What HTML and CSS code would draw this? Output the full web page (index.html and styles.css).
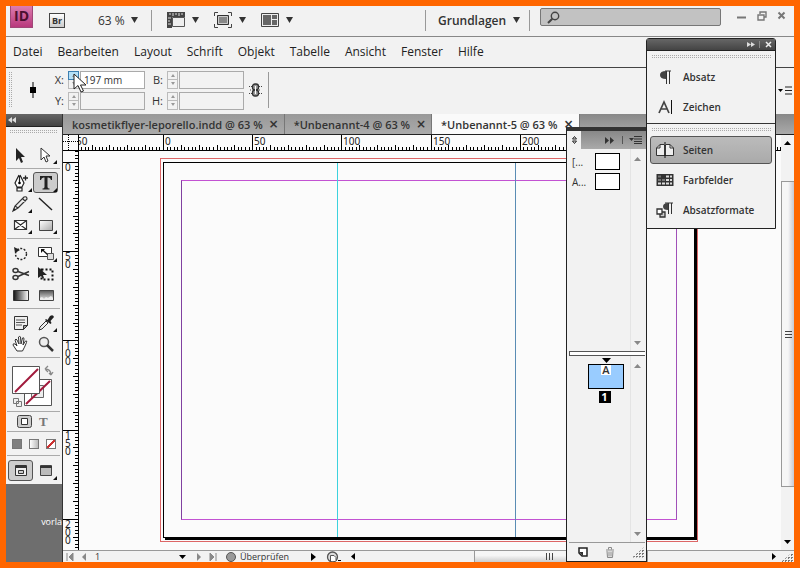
FILE: index.html
```html
<!DOCTYPE html>
<html lang="de">
<head>
    <title>InDesign</title>
    <meta charset="UTF-8">
    <link rel="stylesheet" href="styles.css">
</head>
<body>
<div class="window">
    <header class="app-bar">
        <div class="app-logo">ID</div>
        <button class="bridge">Br</button>
        <label class="pick zoom-pick">
            <select aria-label="Zoom"><option>63 %</option></select>
            <svg class="caret" viewBox="0 0 7 6"><path d="M0 0h7L3.500 6z"/></svg>
        </label>
        <span class="rule"></span>
        <button class="view-btn" aria-label="Anzeigeoptionen">
            <svg width="18" height="16" viewBox="0 0 18 16"><path d="M0 0h18v5H5v11H0z" fill="#444"/><path d="M5.500 5.500h12v9h-12z" fill="#eee" stroke="#555"/><path d="M3 1v2M6 1v3M9 1v2M12 1v3M15 1v2M1 6h3M1 9h2M1 12h3" stroke="#ddd"/></svg>
            <svg class="caret" viewBox="0 0 7 6"><path d="M0 0h7L3.500 6z"/></svg>
        </button>
        <button class="view-btn" aria-label="Bildschirmmodus">
            <svg width="18" height="16" viewBox="0 0 18 16"><path d="M.5 4V.5H4M14 .5h3.500V4M17.500 12v3.500H14M4 15.500H.5V12" fill="none" stroke="#444"/><path d="M3.500 3.500h11v9h-11z" fill="#888" stroke="#333"/><path d="M4.500 4.500h9v7h-9z" fill="none" stroke="#ccc"/></svg>
            <svg class="caret" viewBox="0 0 7 6"><path d="M0 0h7L3.500 6z"/></svg>
        </button>
        <button class="view-btn" aria-label="Dokumente anordnen">
            <svg width="18" height="14" viewBox="0 0 18 14"><path d="M.5.5h17v13H.5z" fill="#eee" stroke="#444"/><path d="M2 2h8v10H2zM11 2h5v4h-5zM11 7h5v5h-5z" fill="#666"/></svg>
            <svg class="caret" viewBox="0 0 7 6"><path d="M0 0h7L3.500 6z"/></svg>
        </button>
        <div class="app-right">
            <span class="rule"></span>
            <label class="pick workspace-pick">
                <select aria-label="Arbeitsbereich"><option>Grundlagen</option></select>
                <svg class="caret" viewBox="0 0 7 6"><path d="M0 0h7L3.500 6z"/></svg>
            </label>
            <span class="rule"></span>
            <label class="search">
                <svg width="13" height="13" viewBox="0 0 13 13"><circle cx="8" cy="5" r="3.700" fill="none" stroke="#444" stroke-width="1.400"/><path d="M5.300 7.700L1 12" stroke="#444" stroke-width="2"/></svg>
                <input type="search" aria-label="Suche">
            </label>
            <div class="window-buttons">
                <button aria-label="Minimieren"><svg width="10" height="10" viewBox="0 0 10 10"><path d="M0 6.500h9" stroke="#777" stroke-width="2"/></svg></button>
                <button aria-label="Wiederherstellen"><svg width="10" height="10" viewBox="0 0 10 10"><path d="M3 3V1h6v5H7M1 4h6v5H1z" fill="none" stroke="#777" stroke-width="1.400"/></svg></button>
                <button aria-label="Schließen"><svg width="10" height="10" viewBox="0 0 10 10"><path d="M1.500 1.500l6 6M7.500 1.500l-6 6" stroke="#777" stroke-width="2"/></svg></button>
            </div>
        </div>
    </header>

    <nav class="menu-bar">
        <a href="#">Datei</a>
        <a href="#">Bearbeiten</a>
        <a href="#">Layout</a>
        <a href="#">Schrift</a>
        <a href="#">Objekt</a>
        <a href="#">Tabelle</a>
        <a href="#">Ansicht</a>
        <a href="#">Fenster</a>
        <a href="#">Hilfe</a>
    </nav>

    <div class="control-bar">
        <span class="grip-v"></span>
        <svg class="ref-point" width="8" height="16" viewBox="0 0 8 16"><path d="M4 0v16" stroke="#000"/><path d="M1 5h6v6H1z"/></svg>
        <div class="fields">
            <label for="pos-x">X:</label>
            <div class="stepper">
                <div class="steps hot"><button aria-label="X erhöhen"></button><button aria-label="X verringern"></button></div>
                <input id="pos-x" type="text" value="197 mm">
            </div>
            <label for="size-b">B:</label>
            <div class="stepper">
                <div class="steps"><button aria-label="B erhöhen"></button><button aria-label="B verringern"></button></div>
                <input id="size-b" type="text">
            </div>
            <label for="pos-y">Y:</label>
            <div class="stepper">
                <div class="steps"><button aria-label="Y erhöhen"></button><button aria-label="Y verringern"></button></div>
                <input id="pos-y" type="text">
            </div>
            <label for="size-h">H:</label>
            <div class="stepper">
                <div class="steps"><button aria-label="H erhöhen"></button><button aria-label="H verringern"></button></div>
                <input id="size-h" type="text">
            </div>
        </div>
        <button class="chain" aria-label="Proportionen verketten">
            <svg width="13" height="14" viewBox="0 0 13 14"><path d="M0 3.500h3M1 7h2M0 10.500h3M10 3.500h3M10 7h2M10 10.500h3" stroke="#444" stroke-dasharray="1 1"/><rect x="3.500" y="1" width="6" height="6" rx="2.500" fill="#999" stroke="#333" stroke-width="1.300"/><rect x="3.500" y="7" width="6" height="6" rx="2.500" fill="#999" stroke="#333" stroke-width="1.300"/><path d="M6.500 3v8" stroke="#fff"/></svg>
        </button>
        <span class="rule tall"></span>
        <button class="panel-menu" aria-label="Bedienfeldmenü">
            <svg width="14" height="9" viewBox="0 0 14 9"><path d="M0 3h5L2.500 6z"/><path d="M7 1h7M7 4.500h7M7 8h7" stroke="#222"/></svg>
        </button>
    </div>

    <div class="workspace">
        <aside class="toolbox">
            <div class="toolbox-head"><svg width="8" height="6" viewBox="0 0 8 6"><path d="M4 0v6L0 3zM8 0v6L4 3z" fill="#ddd"/></svg></div>
            <div class="grip-h"></div>
            <div class="tools">
                <button aria-label="Auswahl"><svg viewBox="0 0 18 18"><path d="M4 2v13l3-3 2 5 2-1-2-5h4z" fill="#222"/></svg></button>
                <button class="more" aria-label="Direktauswahl"><svg viewBox="0 0 18 18"><path d="M4 2v12l3-3 2 5 2-1-2-5h4z" fill="#fff" stroke="#333"/></svg></button>
            </div>
            <div class="tools">
                <button class="more" aria-label="Zeichenstift"><svg viewBox="0 0 18 18"><path d="M7 1L3 9l2 4h5l2-4-4-8M7.500 2v7M5 14h5v3H5z" fill="#fff" stroke="#222" stroke-width="1.200"/><circle cx="7.500" cy="9" r="1.300"/><path d="M11 4h5M13.500 1.500v5" stroke="#222" stroke-width="1.300"/></svg></button>
                <button class="more selected" aria-label="Text"><svg viewBox="0 0 18 18"><path d="M3 2h12v4h-1q-.5-2.500-2.500-2.500h-1V13q0 1.500 2 1.500v1h-7v-1q2 0 2-1.500V3.500h-1Q4.500 3.500 4 6H3z" fill="#222"/></svg></button>
                <button class="more" aria-label="Buntstift"><svg viewBox="0 0 18 18"><path d="M1 16l2-5L12 2q3-1 3 2L6 13zM3 11l3 2M10.500 3.500l3 3" fill="#eee" stroke="#333" stroke-width="1.200"/><path d="M1 16l1-3 2 2z" fill="#222"/></svg></button>
                <button aria-label="Linie"><svg viewBox="0 0 18 18"><path d="M2 3l13 12" stroke="#222" stroke-width="1.400"/></svg></button>
                <button class="more" aria-label="Rechteckrahmen"><svg viewBox="0 0 18 18"><path d="M2.500 4.500h12v9h-12zM2.500 4.500l12 9M14.500 4.500l-12 9" fill="#fff" stroke="#333" stroke-width="1.200"/></svg></button>
                <button class="more" aria-label="Rechteck"><svg viewBox="0 0 18 18"><path d="M2.500 4.500h13v10h-13z" fill="url(#soft)" stroke="#444"/></svg></button>
            </div>
            <div class="tools">
                <button aria-label="Drehen"><svg viewBox="0 0 18 18"><circle cx="9" cy="10" r="5.500" fill="none" stroke="#222" stroke-width="1.400" stroke-dasharray="2 1.500"/><path d="M2 3l1 6 5-3z" fill="#222"/></svg></button>
                <button class="more" aria-label="Skalieren"><svg viewBox="0 0 18 18"><path d="M1.500 3.500h13v9h-13z" fill="#fff" stroke="#333"/><path d="M10.500 9.500h6v6h-6z" fill="#ddd" stroke="#555"/><path d="M4 5h4L6.800 6.200 11 10l-1 1-4.200-4L4 9z" fill="#111"/></svg></button>
                <button aria-label="Schere"><svg viewBox="0 0 18 18"><g fill="none" stroke="#333" stroke-width="1.500"><ellipse cx="3.500" cy="5.500" rx="2.500" ry="2"/><ellipse cx="3.500" cy="12.500" rx="2.500" ry="2"/><path d="M6 6.500l11 4M6 11.500l11-5"/></g></svg></button>
                <button aria-label="Frei transformieren"><svg viewBox="0 0 18 18"><path d="M4.500 4.500h11v10h-11z" fill="none" stroke="#111" stroke-width="2" stroke-dasharray="2 2"/><path d="M1 2v11l3-2 2 3 1-1-1-3h4z" fill="#222"/></svg></button>
                <button aria-label="Verlauf"><svg viewBox="0 0 18 18"><path d="M1.500 4.500h15v10h-15z" fill="url(#gradient)" stroke="#333"/></svg></button>
                <button aria-label="Weiche Verlaufskante"><svg viewBox="0 0 18 18"><path d="M2.500 4.500h14v10h-14z" fill="url(#feather)" stroke="#444"/><path d="M3 14v-2l2-1 2 2 2-2 2 1 3-2 2 2v2z" fill="#eee"/></svg></button>
            </div>
            <div class="tools">
                <button aria-label="Notiz"><svg viewBox="0 0 18 18"><path d="M2.500 2.500h13v9l-4 4h-9z" fill="#eee" stroke="#333"/><path d="M4 6h9M4 8.500h9M4 11h6" stroke="#555"/><path d="M11.500 15.500v-4h4z" fill="#999" stroke="#333"/></svg></button>
                <button class="more" aria-label="Pipette"><svg viewBox="0 0 18 18"><path d="M2 16l1-3 6-6 2 2-6 6z" fill="#eee" stroke="#333"/><path d="M8 6l1-1 1.500 1L13 2q3-2 4 1l-3.500 4 1 2-1 1z" fill="#222"/></svg></button>
                <button aria-label="Hand"><svg viewBox="0 0 18 18"><path d="M5 16Q3 13 1 10q0-2 2-1l2 2-2-6q1-2 2 0l2 4-.5-7q1.500-1.500 2 0l.5 7 1.500-6q1.500-1 1.500 1l-1 6 2.500-4q2-.5 1 1.500-2 5-4 8.500z" fill="#fff" stroke="#333"/></svg></button>
                <button aria-label="Zoom"><svg viewBox="0 0 18 18"><circle cx="7" cy="7" r="4.500" fill="#eee" stroke="#555" stroke-width="1.500"/><path d="M10 10l6 6" stroke="#333" stroke-width="2.500"/></svg></button>
            </div>
            <div class="swatches">
                <svg width="44" height="44" viewBox="0 0 44 44"><path d="M13.500 14.500h27v26h-27z" fill="#fff" stroke="#555"/><path d="M20.500 20.500h12v12h-12z" fill="#eee" stroke="#666"/><path d="M15 39l24-23" stroke="#a11a3c" stroke-width="2"/><path d="M1.500 1.500h27v27h-27z" fill="#fff" stroke="#555"/><path d="M4 27L27 4" stroke="#a11a3c" stroke-width="2"/><path d="M34 4q6 0 6 6M34 4l3-3M34 4l3 3M40 10l-2-2M40 10l2-3" fill="none" stroke="#888" stroke-width="1.300"/><path d="M5.500 36.500h5v5h-5zM2.500 33.500h5v5h-5z" fill="#eee" stroke="#777"/></svg>
            </div>
            <div class="apply-to">
                <button aria-label="Formatierung wirkt auf Rahmen"><svg width="15" height="13" viewBox="0 0 15 13"><rect x=".5" y=".5" width="14" height="12" rx="2" fill="#ccc" stroke="#444"/><path d="M4.500 3.500h6v6h-6z" fill="#fff" stroke="#333"/></svg></button>
                <button class="apply-text">T</button>
            </div>
            <div class="apply-color">
                <button class="solid" aria-label="Farbe"></button>
                <button class="fade" aria-label="Verlauf anwenden"></button>
                <button class="none" aria-label="Ohne"></button>
            </div>
            <div class="tools screen-mode">
                <button class="selected" aria-label="Normal"><svg viewBox="0 0 18 18"><path d="M3.500 3.500h11v10h-11z" fill="#eee" stroke="#333"/><path d="M3 5h12" stroke="#333" stroke-width="2"/><path d="M6.500 8.500h5v3h-5z" fill="#ccc" stroke="#333"/></svg></button>
                <button class="more" aria-label="Vorschau"><svg viewBox="0 0 18 18"><path d="M3.500 3.500h11v10h-11z" fill="#bbb" stroke="#444"/><path d="M3 5h12" stroke="#333" stroke-width="2"/></svg></button>
            </div>
            <div class="toolbox-rest"><span>vorla</span></div>
        </aside>

        <main class="document">
            <div class="tabs">
                <div class="tab">kosmetikflyer-leporello.indd @ 63 % <button aria-label="Tab schließen">×</button></div>
                <div class="tab">*Unbenannt-4 @ 63 % <button aria-label="Tab schließen">×</button></div>
                <div class="tab active">*Unbenannt-5 @ 63 % <button aria-label="Tab schließen">×</button></div>
            </div>
            <div class="ruler-corner"><svg width="15" height="15" viewBox="0 0 15 15"><path d="M0 6.500h15M5.500 0v15" stroke="#000" stroke-dasharray="1 1"/></svg></div>
            <svg class="ruler-x" id="ruler-x"></svg>
            <svg class="ruler-y" id="ruler-y"></svg>
            <div class="canvas">
                <div class="bleed">
                    <div class="page">
                        <div class="margins"></div>
                        <span class="guide guide-left"></span>
                        <span class="guide guide-right"></span>
                    </div>
                </div>
            </div>
            <div class="scroll-y">
                <button aria-label="Nach oben"><svg width="7" height="4" viewBox="0 0 7 4"><path d="M0 4h7L3.500 0z"/></svg></button>
                <span class="track-before"></span>
                <span class="thumb"><i></i><i></i><i></i></span>
                <span class="track-after"></span>
                <button aria-label="Nach unten"><svg width="7" height="4" viewBox="0 0 7 4"><path d="M0 0h7L3.500 4z"/></svg></button>
            </div>
            <footer class="status-bar">
                <div class="page-nav">
                    <button aria-label="Erste Seite"><svg width="8" height="8" viewBox="0 0 8 8"><path d="M1 0v8M3 4l4-4v8z" stroke="#888" fill="#888"/></svg></button>
                    <button aria-label="Vorherige Seite"><svg width="8" height="8" viewBox="0 0 8 8"><path d="M6 0v8L2 4z" fill="#888"/></svg></button>
                    <label class="page-pick"><select aria-label="Seite"><option>1</option></select><svg width="7" height="4" viewBox="0 0 7 4"><path d="M0 0h7L3.500 4z"/></svg></label>
                    <button aria-label="Nächste Seite"><svg width="8" height="8" viewBox="0 0 8 8"><path d="M2 0v8l4-4z" fill="#888"/></svg></button>
                    <button aria-label="Letzte Seite"><svg width="8" height="8" viewBox="0 0 8 8"><path d="M7 0v8M1 0v8l4-4z" stroke="#888" fill="#888"/></svg></button>
                </div>
                <button class="preflight"><svg width="10" height="10" viewBox="0 0 10 10"><circle cx="5" cy="5" r="4.500" fill="#999" stroke="#555"/></svg>Überprüfen<svg class="preflight-go" width="5" height="8" viewBox="0 0 5 8"><path d="M0 0v8l5-4z"/></svg></button>
                <button class="structure" aria-label="Datei anzeigen"><svg width="15" height="11" viewBox="0 0 15 11"><circle cx="6.500" cy="6" r="5" fill="#ddd" stroke="#555" stroke-width="1.300"/><path d="M4.500 10V4.500h3.500l2 2V10" fill="#fff" stroke="#555"/><path d="M12 9h3v1h-3z"/></svg></button>
                <div class="scroll-x">
                    <button aria-label="Nach links"><svg width="4" height="7" viewBox="0 0 4 7"><path d="M4 0v7L0 3.500z"/></svg></button>
                    <span class="thumb"><i></i><i></i><i></i></span>
                    <button aria-label="Nach rechts"><svg width="4" height="7" viewBox="0 0 4 7"><path d="M0 0v7l4-3.500z"/></svg></button>
                </div>
                <span class="resize"></span>
            </footer>
        </main>
    </div>

    <section class="pages-panel">
        <div class="pages-head">
            <button class="pages-tab" aria-label="Seiten"><svg width="5" height="8" viewBox="0 0 5 8"><path d="M.5 3l2-2.500 2 2.500zM.5 5l2 2.500 2-2.500z" fill="none" stroke="#222"/></svg></button>
            <div class="pages-tools">
                <button aria-label="Reduzieren"><svg width="9" height="7" viewBox="0 0 9 7"><path d="M0 0v7l4-3.500zM5 0v7l4-3.500z" fill="#333"/></svg></button>
                <button class="pages-menu" aria-label="Seitenmenü"><svg width="13" height="8" viewBox="0 0 13 8"><path d="M0 2h5L2.500 5z" fill="#333"/><path d="M5 .5h8M5 3h8M5 5.500h8M5 7.500h8" stroke="#333"/></svg></button>
            </div>
        </div>
        <div class="masters">
            <ul class="master-list">
                <li>[...<span class="thumb-page"></span></li>
                <li>A...<span class="thumb-page"></span></li>
            </ul>
            <div class="mini-scroll">
                <svg width="7" height="4" viewBox="0 0 7 4"><path d="M0 4h7L3.500 0z" fill="#888"/></svg>
                <svg width="7" height="4" viewBox="0 0 7 4"><path d="M0 0h7L3.500 4z" fill="#888"/></svg>
            </div>
        </div>
        <div class="splitter"></div>
        <div class="spreads">
            <div class="spread">
                <svg width="9" height="5" viewBox="0 0 9 5"><path d="M0 0h9L4.500 5z"/></svg>
                <div class="spread-page"><b>A</b></div>
                <div class="spread-number">1</div>
            </div>
            <div class="mini-scroll">
                <svg width="7" height="4" viewBox="0 0 7 4"><path d="M0 4h7L3.500 0z" fill="#888"/></svg>
                <svg width="7" height="4" viewBox="0 0 7 4"><path d="M0 0h7L3.500 4z" fill="#888"/></svg>
            </div>
        </div>
        <div class="pages-foot">
            <button aria-label="Neue Seite"><svg width="10" height="10" viewBox="0 0 10 10"><path d="M1 1h8v8H4L1 6z" fill="#fff" stroke="#222" stroke-width="1.500"/><path d="M1 5h4v4z" fill="#333"/></svg></button>
            <button aria-label="Seite löschen"><svg width="10" height="11" viewBox="0 0 10 11"><path d="M1 3h8M3.500 2.500v-2h3v2M2 4l.5 6.500h5L8 4M4 4.500v5M6 4.500v5" fill="none" stroke="#888"/></svg></button>
            <span class="resize"></span>
        </div>
    </section>

    <section class="dock">
        <div class="dock-head">
            <button aria-label="Erweitern"><svg width="8" height="5" viewBox="0 0 8 5"><path d="M0 0v5l4-2.500zM4 0v5l4-2.500z" fill="#ddd"/></svg></button>
            <button class="dock-close" aria-label="Schließen"><svg width="7" height="7" viewBox="0 0 7 7"><path d="M1 1l5 5M6 1L1 6" stroke="#eee" stroke-width="1.500"/></svg></button>
        </div>
        <div class="dock-group">
            <div class="grip-h"></div>
            <button><svg viewBox="0 0 18 16"><path d="M9 2h6M10.500 2v13M13.500 2v13" stroke="#333"/><path d="M10 2v8Q4 10 4 6t6-4z" fill="#444"/></svg>Absatz</button>
            <button><svg viewBox="0 0 18 16"><path d="M3 14L8 3l5 11M5 10h6" fill="none" stroke="#444" stroke-width="1.700"/><path d="M15.500 1v14" stroke="#111"/></svg>Zeichen</button>
        </div>
        <div class="dock-group">
            <div class="grip-h"></div>
            <button class="selected"><svg viewBox="0 0 18 16"><path d="M9 4v9.500H.5V6l3.500-3.500h4zM9 4v9.500h8.500V6L14 2.500h-4z" fill="#eee" stroke="#333"/><path d="M.5 6H4V2.500M17.500 6H14V2.500" fill="none" stroke="#333"/><path d="M9 0v16" stroke="#111"/></svg>Seiten</button>
            <button><svg viewBox="0 0 18 16"><path d="M.5 2h17v12H.5z" fill="#333"/><path d="M2 3.500h3v2H2zM2 7h3v2H2zM6 7h3v2H6z" fill="#777"/><path d="M10 3.500h3v2h-3zM14 3.500h2v2h-2zM10 7h3v2h-3zM14 7h2v2h-2zM2 10.500h3v2H2zM6 10.500h3v2H6zM10 10.500h3v2h-3zM14 10.500h2v2h-2z" fill="#ddd"/></svg>Farbfelder</button>
            <button><svg viewBox="0 0 18 16"><path d="M9 1h8M12.500 1v11M15.500 1v11" stroke="#333"/><path d="M12 1v7Q7 8 7 4.500T12 1z" fill="#444"/><path d="M4 10h5v5H4z" fill="#ccc" stroke="#333" stroke-width="1.300"/><path d="M1 7h5v5H1z" fill="#fff" stroke="#333" stroke-width="1.300"/></svg>Absatzformate</button>
        </div>
    </section>

    <svg class="pointer" width="14" height="20" viewBox="0 0 14 20"><path d="M1 1v15l4-3.500 3 6.500 2.500-1L7.500 12H13z" fill="#fff" stroke="#222"/></svg>

    <svg class="defs" width="0" height="0">
        <linearGradient id="soft" x1="0" y1="0" x2="1" y2="1"><stop offset="0" stop-color="#fff"/><stop offset="1" stop-color="#aaa"/></linearGradient>
        <linearGradient id="gradient"><stop offset="0" stop-color="#111"/><stop offset="1" stop-color="#fff"/></linearGradient>
        <linearGradient id="feather" x1="0" y1="0" x2="0" y2="1"><stop offset="0" stop-color="#555"/><stop offset="1" stop-color="#eee"/></linearGradient>
    </svg>
</div>
<script src="rulers.js"></script>
</body>
</html>
```
FILE: styles.css
```css
* {
    box-sizing: border-box;
}

body {
    margin: 0;
    font-family: "Open Sans", "Noto Sans", sans-serif;
    font-size: 11px;
    color: #333;
}

button, input, select {
    font: inherit;
    color: inherit;
    margin: 0;
    padding: 0;
    border: 0;
    background: none;
    appearance: none;
}

button {
    display: flex;
    align-items: center;
    justify-content: center;
}

svg {
    display: block;
    flex: none;
}

.defs {
    position: absolute;
}

.window {
    position: relative;
    display: flex;
    flex-direction: column;
    height: 100vh;
    border: 6px solid #ff6600;
    background: #f2f2f2;
    background-clip: padding-box;
    overflow: hidden;
}

.rule {
    width: 1px;
    height: 21px;
    background: #999;
}

.caret {
    width: 7px;
    height: 6px;
    fill: #333;
}

/* top bar */
.app-bar {
    display: flex;
    align-items: center;
    height: 31px;
    padding: 0 4px 2px;
    border-bottom: 1px solid #888;
}

.app-logo {
    align-self: flex-start;
    width: 23px;
    height: 22px;
    line-height: 20px;
    text-align: center;
    font-size: 14px;
    font-weight: bold;
    color: #4a0f30;
    background: linear-gradient(#dd7db0, #b8387c);
    border: 1px solid #a04878;
    border-top: 0;
}

.bridge {
    width: 16px;
    height: 15px;
    margin-left: 16px;
    border: 1px solid #444;
    background: linear-gradient(#fff, #ccc);
    font-size: 9px;
    font-weight: bold;
}

.pick {
    display: flex;
    align-items: center;
    justify-content: space-between;
}

.zoom-pick {
    width: 40px;
    margin: 0 13px 0 33px;
    font-size: 12px;
}

.view-btn {
    gap: 7px;
    margin-left: 15px;
}

.app-right {
    display: flex;
    align-items: center;
    margin-left: auto;
}

.workspace-pick {
    width: 82px;
    margin: 0 9px 0 12px;
    font-size: 12px;
    font-weight: 600;
}

.search {
    display: flex;
    align-items: center;
    width: 181px;
    height: 18px;
    margin: 0 16px 6px 10px;
    padding-left: 6px;
    border: 1px solid #777;
    border-radius: 2px;
    background: #c2c2c2;
}

.search input {
    width: 100%;
    min-width: 0;
}

.window-buttons {
    display: flex;
    gap: 10px;
    margin: 0 3px 8px 0;
}

/* menus */
.menu-bar {
    display: flex;
    align-items: center;
    gap: 15px;
    height: 31px;
    padding: 0 7px 2px;
    border-bottom: 1px solid #444;
}

.menu-bar a {
    font-size: 12px;
    color: #222;
    text-decoration: none;
}

/* control bar */
.control-bar {
    display: flex;
    align-items: center;
    height: 46px;
    padding: 0 2px 2px;
}

.grip-v {
    width: 4px;
    height: 36px;
    background: conic-gradient(#aaa 25%, transparent 0) 0 0 / 2px 2px;
}

.ref-point {
    margin: 0 14px 0 17px;
}

.fields {
    display: grid;
    grid-template-columns: 13px 77px 14px 77px;
    align-items: center;
    gap: 3px 4px;
}

.fields label {
    text-align: right;
}

.stepper {
    display: flex;
    gap: 1px;
}

.stepper input {
    width: 65px;
    height: 18px;
    padding-left: 3px;
    border: 1px solid #aaa;
    font-size: 10px;
}

#pos-x {
    background: #fff;
}

.steps {
    width: 11px;
}

.steps button {
    width: 11px;
    height: 9px;
    border: 1px solid #bbb;
}

.steps button::before {
    content: "";
    border: 2px solid transparent;
    border-top-width: 0;
    border-bottom: 3px solid #999;
}

.steps button + button {
    border-top: 0;
}

.steps button + button::before {
    border-bottom: 0;
    border-top: 3px solid #999;
}

.steps.hot button:first-child {
    border-color: #3c7fb1;
    background: #b5e0f7;
}

.chain {
    margin: 0 6px 0 5px;
}

.rule.tall {
    height: 36px;
}

.panel-menu {
    margin-left: auto;
}

/* tools on the left */
.workspace {
    display: flex;
    flex: 1;
    min-height: 0;
}

.toolbox {
    display: flex;
    flex-direction: column;
    width: 57px;
    border-right: 1px solid #333;
}

.toolbox-head {
    display: flex;
    align-items: center;
    height: 13px;
    padding-left: 2px;
    background: linear-gradient(#666, #444);
    border-bottom: 1px solid #222;
}

.grip-h {
    height: 4px;
    margin: 3px 4px 7px 3px;
    background: conic-gradient(#aaa 25%, transparent 0) 0 0 / 2px 2px;
}

.tools {
    display: grid;
    grid-template-columns: 25px 25px;
    grid-auto-rows: 21px;
    padding: 3px 0 3px 1px;
    margin: 0 2px 0 1px;
    border-bottom: 1px solid #aaa;
}

.tools button {
    position: relative;
    border: 1px solid transparent;
}

.tools svg {
    width: 18px;
    height: 18px;
}

.tools .more::after {
    content: "";
    position: absolute;
    right: 0;
    bottom: 0;
    border: 2px solid #111;
    border-top-color: transparent;
    border-left-color: transparent;
}

.tools .selected {
    border-color: #555;
    border-radius: 3px;
    background: #ccc;
}

.swatches {
    height: 54px;
    padding: 7px 0 0 4px;
    margin: 0 2px 0 1px;
    border-bottom: 1px solid #aaa;
}

.apply-to, .apply-color {
    display: flex;
    align-items: center;
    margin: 0 2px 0 1px;
    border-bottom: 1px solid #aaa;
}

.apply-to {
    gap: 7px;
    height: 20px;
    padding-left: 10px;
}

.apply-text {
    font-family: "Liberation Serif", serif;
    font-size: 13px;
    font-weight: bold;
    color: #777;
}

.apply-color {
    gap: 7px;
    height: 24px;
    padding-left: 5px;
}

.apply-color button {
    width: 10px;
    height: 10px;
    border: 1px solid #777;
}

.apply-color .solid {
    background: #808080;
}

.apply-color .fade {
    background: linear-gradient(90deg, #fff, #bbb);
}

.apply-color .none {
    background: linear-gradient(135deg, #fff 42%, #c33 42%, #c33 58%, #fff 58%);
}

.screen-mode {
    padding-top: 4px;
    border-bottom: 0;
}

.toolbox-rest {
    flex: 1;
    background: #6e6e6e;
    padding-top: 30px;
    text-align: right;
    font-size: 9px;
    line-height: 16px;
    color: #fff;
}

/* document window */
.document {
    display: grid;
    grid-template-columns: 16px 1fr 13px;
    grid-template-rows: 21px 16px 1fr 12px;
    flex: 1;
    min-width: 0;
    background: #fbfbfb;
}

.tabs {
    grid-column: 1 / -1;
    display: flex;
    background: linear-gradient(#888, #aaa);
    border-bottom: 1px solid #222;
}

.tab {
    display: flex;
    align-items: center;
    gap: 6px;
    padding: 0 5px 0 9px;
    border-right: 1px solid #777;
    background: linear-gradient(#999, #aaa);
    font-weight: 600;
    white-space: nowrap;
}

.tab.active {
    background: #fafafa;
}

.tab button {
    width: 10px;
    font-size: 16px;
    line-height: 16px;
}

.ruler-corner {
    border-right: 1px solid #000;
    border-bottom: 1px solid #000;
}

.ruler-x {
    width: 100%;
    height: 16px;
    border-bottom: 1px solid #000;
}

.ruler-y {
    grid-column: 1;
    grid-row: 3;
    width: 16px;
    height: 100%;
    border-right: 1px solid #000;
}

.ruler-x text, .ruler-y text {
    font-family: "Noto Sans", sans-serif;
    font-size: 10px;
    fill: #222;
}

.canvas {
    grid-column: 2;
    grid-row: 3;
    overflow: hidden;
    padding: 7px 0 0 81px;
}

.bleed {
    width: 538px;
    height: 384px;
    padding: 3px 3px 3px 2px;
    border: 1px solid #d66;
}

/* page shadow is the thick black edge at right and bottom */
.page {
    position: relative;
    width: 532px;
    height: 376px;
    padding: 17px;
    border: 1px solid #000;
    box-shadow: 2px 2px #000;
}

.margins {
    height: 100%;
    border: 1px solid #c252d2;
    border-left-color: #8040a0;
    border-right-color: #a050b8;
}

.guide {
    position: absolute;
    top: 0;
    bottom: 0;
    width: 1px;
}

.guide-left {
    left: 173px;
    background: #3cd2de;
}

.guide-right {
    left: 351px;
    background: #5a8cb4;
}

.scroll-y {
    grid-column: 3;
    grid-row: 2 / 4;
    display: flex;
    flex-direction: column;
    background: #f2f2f2;
}

.scroll-y button {
    height: 16px;
}

.track-before {
    flex: 30;
}

.track-after {
    flex: 47;
}

.thumb {
    display: flex;
    align-items: center;
    justify-content: center;
    gap: 2px;
}

.scroll-y .thumb {
    flex: 305;
    flex-direction: column;
    border: 1px solid #999;
    border-right: 0;
    background: linear-gradient(90deg, #f6f6f6 50%, #c8c8d4);
}

.scroll-y .thumb i {
    width: 7px;
    height: 1px;
    background: #444;
}

.status-bar {
    grid-column: 1 / -1;
    display: flex;
    min-width: 0;
    border-top: 1px solid #999;
    background: #f2f2f2;
    overflow: hidden;
}

.page-nav {
    display: flex;
    align-items: center;
    gap: 5px;
    padding-left: 2px;
}

.page-nav button {
    width: 9px;
}

.page-pick {
    display: flex;
    align-items: center;
    justify-content: space-between;
    width: 91px;
    margin: 0 3px 0 2px;
    font-size: 9px;
    line-height: 11px;
}

.preflight {
    gap: 4px;
    margin-left: 9px;
    font-size: 9px;
    line-height: 11px;
}

.preflight-go {
    margin-left: 18px;
}

.structure {
    margin-left: 10px;
}

.scroll-x {
    display: flex;
    flex: 1;
    margin-left: 5px;
}

.scroll-x button {
    width: 14px;
}

.scroll-x .thumb {
    width: 174px;
    margin: 0 auto 0 114px;
    padding-right: 24px;
    border: 1px solid #999;
    border-width: 0 1px;
    background: linear-gradient(#f6f6f6 40%, #ccc);
}

.scroll-x .thumb i {
    width: 1px;
    height: 7px;
    background: #444;
}

.resize {
    width: 13px;
    height: 11px;
    background: conic-gradient(#777 25%, transparent 0) 0 0 / 3px 3px;
    clip-path: polygon(100% 0, 100% 100%, 0 100%);
}

/* floating panels */
.pages-panel {
    position: absolute;
    top: 121px;
    right: 147px;
    bottom: 0;
    display: flex;
    flex-direction: column;
    width: 81px;
    border: 1px solid #222;
    border-top: 4px solid #333;
    background: #f2f2f2;
}

.pages-head {
    display: flex;
    height: 18px;
}

.pages-tab {
    width: 14px;
}

.pages-tools {
    display: flex;
    flex: 1;
    align-items: center;
    justify-content: flex-end;
    gap: 8px;
    padding-right: 4px;
    background: linear-gradient(#888, #aaa);
}

.pages-menu {
    padding-left: 6px;
    border-left: 1px solid #555;
}

.masters, .spreads {
    display: flex;
    justify-content: space-between;
}

.masters {
    height: 202px;
}

.master-list {
    flex: 1;
    margin: 0;
    padding: 4px 10px 0 5px;
    list-style: none;
    font-size: 10px;
}

.master-list li {
    display: flex;
    align-items: center;
    justify-content: space-between;
    height: 17px;
    margin-bottom: 3px;
}

.thumb-page {
    width: 25px;
    height: 17px;
    border: 1px solid #000;
    background: #fff;
}

.mini-scroll {
    display: flex;
    flex-direction: column;
    align-items: center;
    justify-content: space-between;
    width: 16px;
    padding: 8px 2px 6px 0;
    border-left: 1px solid #e4e4e4;
}

.splitter {
    height: 5px;
    margin: 0 1px 0 2px;
    border: 1px solid #555;
    border-right: 0;
    background: #fff;
}

.spreads {
    flex: 1;
    margin: 0 0 0 2px;
}

.spread {
    flex: 1;
    display: flex;
    flex-direction: column;
    align-items: center;
    padding: 2px 0 0 13px;
}

.spread-page {
    width: 36px;
    height: 25px;
    margin-top: 1px;
    border: 1px solid #000;
    background: #99ccff;
    text-align: center;
    line-height: 10px;
}

.spread-page b {
    display: inline-block;
    height: 10px;
    padding: 0 1px;
    background: #fff;
    font-weight: 600;
}

.spread-number {
    width: 12px;
    height: 12px;
    margin: 2px 3px 0 0;
    background: #000;
    color: #fff;
    font-weight: bold;
    line-height: 12px;
    text-align: center;
}

.pages-foot {
    display: flex;
    align-items: center;
    justify-content: space-between;
    height: 19px;
    margin: 0 1px 0 2px;
    padding-left: 9px;
    border-top: 1px solid #999;
}

.dock {
    position: absolute;
    top: 32px;
    right: 18px;
    width: 130px;
    padding-bottom: 2px;
    border: 1px solid #222;
    border-radius: 3px 3px 0 0;
    background: #f2f2f2;
}

.dock-head {
    display: flex;
    align-items: center;
    justify-content: flex-end;
    gap: 4px;
    height: 12px;
    padding-right: 3px;
    background: linear-gradient(#666, #444);
    border-bottom: 1px solid #222;
}

.dock-close {
    padding-left: 5px;
    border-left: 1px solid #888;
}

.dock-group {
    padding: 1px 3px 0;
}

.dock-group + .dock-group {
    border-top: 1px solid #333;
}

.dock-group .grip-h {
    margin: 3px 1px 4px;
}

.dock-group button {
    justify-content: flex-start;
    gap: 9px;
    width: 100%;
    height: 28px;
    margin-bottom: 2px;
    padding-left: 5px;
    border: 1px solid transparent;
    border-radius: 3px;
    font-size: 10px;
    font-weight: 600;
}

.dock-group svg {
    width: 18px;
    height: 16px;
}

.dock-group .selected {
    border-color: #555;
    background: linear-gradient(#bbb, #aaa);
}

.pointer {
    position: absolute;
    left: 67px;
    top: 67px;
}
```
FILE: rulers.js
```js
const SVG = 'http://www.w3.org/2000/svg';
const STEP = 89.2 / 50; // pixels per mm at 63 %

function add(parent, name, attrs, text) {
    const el = document.createElementNS(SVG, name);
    for (const key in attrs) el.setAttribute(key, attrs[key]);
    if (text) el.textContent = text;
    parent.appendChild(el);
}

function tickLength(mm) {
    if (mm % 50 === 0) return 16;
    return mm % 10 === 0 ? 5 : 3;
}

const rulerX = document.getElementById('ruler-x');
const endX = (rulerX.clientWidth - 84) / STEP;
for (let mm = -50; mm <= endX; mm += 2) {
    const x = Math.round(84 + mm * STEP);
    const len = tickLength(mm);
    add(rulerX, 'rect', { x: x, y: 15 - len, width: 1, height: len });
    // no label where it would run off the end
    if (mm % 50 === 0 && mm < endX - 12) {
        add(rulerX, 'text', { x: x + 2, y: 10 }, String(Math.abs(mm)));
    }
}

// the vertical ruler stacks its digits
const rulerY = document.getElementById('ruler-y');
const endY = (rulerY.clientHeight - 11) / STEP;
for (let mm = -6; mm <= endY; mm += 2) {
    const y = Math.round(11 + mm * STEP);
    const len = tickLength(mm);
    add(rulerY, 'rect', { x: 15 - len, y: y, width: len, height: 1 });
    if (mm % 50 === 0) {
        String(mm).split('').forEach((digit, i) => {
            add(rulerY, 'text', { x: 2, y: y + 9 + i * 8 }, digit);
        });
    }
}
```
